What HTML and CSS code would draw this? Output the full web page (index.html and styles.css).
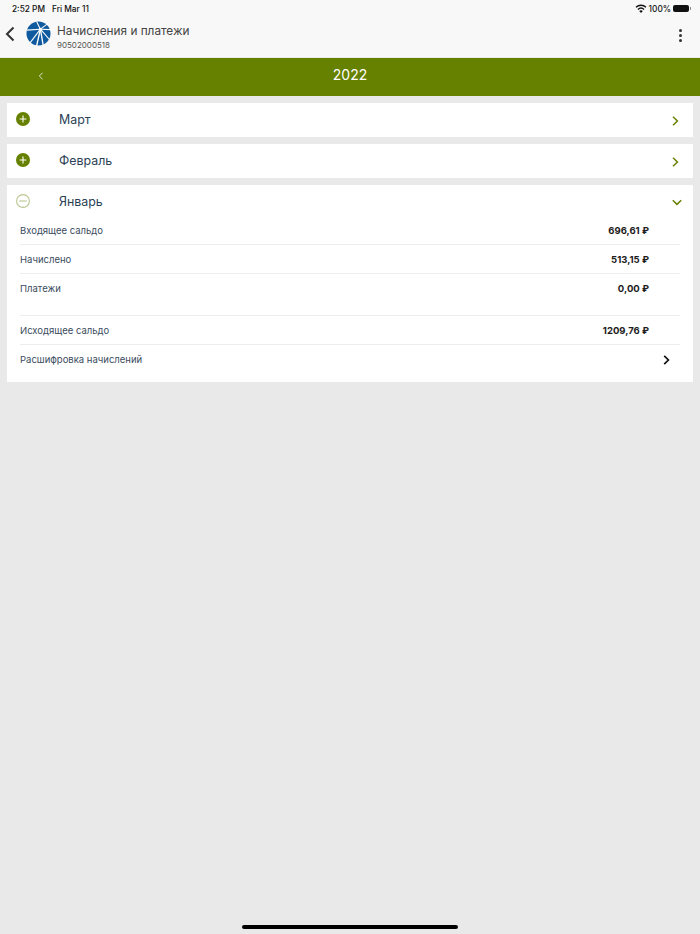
FILE: index.html
```html
<!DOCTYPE html>
<html>

<head>
    <meta charset="UTF-8">
    <title>Начисления и платежи</title>
    <link rel="stylesheet" href="styles.css">
</head>

<body>
    <div class="top">
        <div class="status">
            <span class="status-time">2:52 PM</span>
            <span class="status-date">Fri Mar 11</span>
            <span class="status-right">
                <svg class="wifi" width="12" height="9" viewBox="0 0 12 9">
                    <path d="M6 9 L4.2 6.9 A2.8 2.8 0 0 1 7.8 6.9 Z" fill="#111" />
                    <path d="M2.9 5.4 A4.7 4.7 0 0 1 9.1 5.4" fill="none" stroke="#111" stroke-width="1.3" />
                    <path d="M1 3.2 A7.4 7.4 0 0 1 11 3.2" fill="none" stroke="#111" stroke-width="1.3" />
                </svg>
                <span>100%</span>
                <span class="battery"></span>
                <span class="battery-tip"></span>
            </span>
        </div>
        <div class="header">
            <svg class="back" width="10" height="16" viewBox="0 0 10 16">
                <path d="M8.5 1.5 L2 8 L8.5 14.5" fill="none" stroke="#333" stroke-width="2" />
            </svg>
            <svg class="logo" width="25" height="25" viewBox="0 0 26 26">
                <circle cx="13" cy="13" r="12.5" fill="#0f5a9e" />
                <g stroke="#fff" stroke-width="1.1" fill="none">
                    <path d="M15 8.5 L11 0.5" />
                    <path d="M15 8.5 L23 2.5" />
                    <path d="M15 8.5 L26 9" />
                    <path d="M15 8.5 L1 9.5" />
                    <path d="M15 8.5 L4 23" />
                    <path d="M15 8.5 L11 26" stroke-width="1.4" />
                    <path d="M15 8.5 L18 26" stroke-width="1.4" />
                    <path d="M15 8.5 L25 20" />
                </g>
                <circle cx="15" cy="8.5" r="1.6" fill="#fff" />
            </svg>
            <div class="title-box">
                <div class="title">Начисления и платежи</div>
                <div class="subtitle">90502000518</div>
            </div>
            <div class="dots"><i></i><i></i><i></i></div>
        </div>
    </div>

    <div class="year-bar">
        <svg class="year-prev" width="6" height="8" viewBox="0 0 6 8">
            <path d="M4.5 0.8 L1.3 4 L4.5 7.2" fill="none" stroke="#dfe6c8" stroke-width="1" />
        </svg>
        <span>2022</span>
    </div>

    <div class="months">
        <div class="card">
            <div class="month-head">
                <svg class="sign" width="14" height="14" viewBox="0 0 14 14">
                    <circle cx="7" cy="7" r="7" fill="#668000" />
                    <path d="M3.6 7 H10.4 M7 3.6 V10.4" stroke="#fff" stroke-width="1.1" />
                </svg>
                <span class="month-name">Март</span>
                <svg class="arrow" width="7" height="10" viewBox="0 0 7 10">
                    <path d="M1 0.8 L5.4 5 L1 9.2" fill="none" stroke="#668000" stroke-width="1.5" />
                </svg>
            </div>
        </div>

        <div class="card">
            <div class="month-head">
                <svg class="sign" width="14" height="14" viewBox="0 0 14 14">
                    <circle cx="7" cy="7" r="7" fill="#668000" />
                    <path d="M3.6 7 H10.4 M7 3.6 V10.4" stroke="#fff" stroke-width="1.1" />
                </svg>
                <span class="month-name">Февраль</span>
                <svg class="arrow" width="7" height="10" viewBox="0 0 7 10">
                    <path d="M1 0.8 L5.4 5 L1 9.2" fill="none" stroke="#668000" stroke-width="1.5" />
                </svg>
            </div>
        </div>

        <div class="card">
            <div class="month-head">
                <svg class="sign" width="14" height="14" viewBox="0 0 14 14">
                    <circle cx="7" cy="7" r="6.4" fill="none" stroke="#b9c68e" stroke-width="1.1" />
                    <path d="M3.2 7 H10.8" stroke="#b9c68e" stroke-width="1.1" />
                </svg>
                <span class="month-name">Январь</span>
                <svg class="arrow-down" width="10" height="7" viewBox="0 0 10 7">
                    <path d="M0.8 1.2 L5 5.4 L9.2 1.2" fill="none" stroke="#668000" stroke-width="1.5" />
                </svg>
            </div>
            <div class="rows">
                <div class="row row-first">
                    <span>Входящее сальдо</span>
                    <span class="sum">696,61 ₽</span>
                </div>
                <div class="row">
                    <span>Начислено</span>
                    <span class="sum">513,15 ₽</span>
                </div>
                <div class="row row-tall">
                    <span>Платежи</span>
                    <span class="sum">0,00 ₽</span>
                </div>
                <div class="row">
                    <span>Исходящее сальдо</span>
                    <span class="sum">1209,76 ₽</span>
                </div>
                <div class="row row-link">
                    <span>Расшифровка начислений</span>
                    <svg width="7" height="10" viewBox="0 0 7 10">
                        <path d="M1.2 0.8 L5.4 5 L1.2 9.2" fill="none" stroke="#111" stroke-width="1.7" />
                    </svg>
                </div>
            </div>
        </div>
    </div>

    <div class="home-bar"></div>
</body>

</html>
```

FILE: styles.css
```css
html,
body {
    height: 100%;
}

body {
    margin: 0;
    background: #e9e9e9;
    font-family: Inter, "Noto Sans", sans-serif;
    color: #2b3f55;
    overflow: hidden;
}

.top {
    height: 57px;
    background: #f8f8f8;
}

.status {
    height: 17px;
    padding: 0 9px 0 12px;
    display: flex;
    align-items: center;
    font-size: 8.3px;
    font-weight: 500;
    color: #111;
}

.status-date {
    margin-left: 7px;
}

.status-right {
    margin-left: auto;
    display: flex;
    align-items: center;
    gap: 2px;
}

.battery {
    width: 16px;
    height: 7px;
    border-radius: 2px;
    background: #111;
}

.battery-tip {
    width: 1px;
    height: 3px;
    margin-left: -1px;
    background: #888;
}

.header {
    height: 40px;
    display: flex;
    align-items: flex-start;
}

.back {
    margin-left: 5px;
    margin-top: 9px;
}

.logo {
    margin-left: 11px;
    margin-top: 4px;
}

.title-box {
    margin-left: 6px;
    margin-top: 6px;
}

.title {
    font-size: 11.8px;
    line-height: 16px;
    color: #444;
}

.subtitle {
    font-size: 8px;
    line-height: 12px;
    margin-top: 0;
    color: #555;
}

.dots {
    margin-left: auto;
    margin-right: 18px;
    margin-top: 12px;
    display: flex;
    flex-direction: column;
    gap: 2px;
}

.dots i {
    display: block;
    width: 3px;
    height: 3px;
    border-radius: 50%;
    background: #333;
}

.year-bar {
    height: 38px;
    margin-top: 1px;
    padding-bottom: 6px;
    box-sizing: border-box;
    background: #668000;
    color: #fff;
    font-size: 14px;
    display: flex;
    align-items: center;
    justify-content: center;
    position: relative;
}

.year-prev {
    position: absolute;
    left: 38px;
    top: 14px;
}

.months {
    padding: 7px 7px 0;
    display: flex;
    flex-direction: column;
    gap: 7px;
}

.card {
    background: #fff;
}

.month-head {
    height: 34px;
    padding-bottom: 2px;
    box-sizing: border-box;
    display: flex;
    align-items: center;
    padding-left: 9px;
}

.month-name {
    margin-left: 29px;
    font-size: 12.4px;
}

.arrow {
    margin-left: auto;
    margin-right: 14px;
    margin-top: 3px;
}

.arrow-down {
    margin-left: auto;
    margin-right: 11px;
    margin-top: 3px;
}

.rows {
    padding: 0 13px 8px;
    color: #3a4c60;
}

.row {
    height: 29px;
    display: flex;
    justify-content: space-between;
    align-items: center;
    padding-right: 31px;
    font-size: 9.5px;
    border-bottom: 1px solid #eee;
    box-sizing: border-box;
}

.row-first {
    height: 26px;
    padding-bottom: 2px;
}

.row-tall {
    height: 42px;
    align-items: flex-start;
    padding-top: 9px;
}

.row-link {
    border-bottom: none;
    padding-right: 10px;
}

.sum {
    font-weight: 700;
    color: #1c1c1c;
}

.home-bar {
    position: absolute;
    left: 242px;
    bottom: 5px;
    width: 216px;
    height: 4px;
    border-radius: 2px;
    background: #000;
}
```
